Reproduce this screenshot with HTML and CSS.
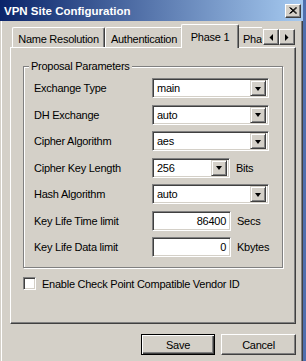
FILE: index.html
```html
<!DOCTYPE html>
<html lang="en">
<head>
    <meta charset="UTF-8">
    <title>VPN Site Configuration</title>
    <link rel="stylesheet" href="styles.css">
</head>
<body>

<div class="window">

    <!--  title bar  -->
    <div class="titlebar">
        <span class="title">VPN Site Configuration</span>
        <span class="closebtn">
            <svg width="8" height="7" viewBox="0 0 8 7"><path d="M0.5 0.5 L7 6.5 M1.5 0.5 L8 6.5 M7 0.5 L0.5 6.5 M8 0.5 L1.5 6.5" stroke="#000" stroke-width="1" fill="none"/></svg>
        </span>
    </div>

    <!--  tabs  -->
    <div class="tabrow">
        <div class="tabstrip">
            <div class="tab tab-name">Name Resolution</div>
            <div class="tab tab-auth">Authentication</div>
            <div class="tab tab-active">Phase 1</div>
            <div class="tab tab-p2">Phase 2</div>
        </div>
        <div class="scroller">
            <span class="scrollbtn">
                <svg width="4" height="7" viewBox="0 0 4 7"><path d="M4 0 L4 7 L0.5 3.5 Z" fill="#000"/></svg>
            </span>
            <span class="scrollbtn">
                <svg width="4" height="7" viewBox="0 0 4 7"><path d="M0 0 L0 7 L3.5 3.5 Z" fill="#000"/></svg>
            </span>
        </div>
    </div>

    <div class="panel">
        <fieldset class="group">
            <legend>Proposal Parameters</legend>
            <div class="rows">
                <div class="row">
                    <span class="label">Exchange Type</span>
                    <span class="combo"><span class="value">main</span><span class="drop"></span></span>
                </div>
                <div class="row">
                    <span class="label">DH Exchange</span>
                    <span class="combo"><span class="value">auto</span><span class="drop"></span></span>
                </div>
                <div class="row">
                    <span class="label">Cipher Algorithm</span>
                    <span class="combo"><span class="value">aes</span><span class="drop"></span></span>
                </div>
                <div class="row">
                    <span class="label">Cipher Key Length</span>
                    <span class="combo combo-short"><span class="value">256</span><span class="drop"></span></span>
                    <span class="unit">Bits</span>
                </div>
                <div class="row">
                    <span class="label">Hash Algorithm</span>
                    <span class="combo"><span class="value">auto</span><span class="drop"></span></span>
                </div>
                <div class="row">
                    <span class="label">Key Life Time limit</span>
                    <span class="field">86400</span>
                    <span class="unit">Secs</span>
                </div>
                <div class="row">
                    <span class="label">Key Life Data limit</span>
                    <span class="field">0</span>
                    <span class="unit">Kbytes</span>
                </div>
            </div>
        </fieldset>

        <div class="check">
            <span class="checkbox"></span>
            <span>Enable Check Point Compatible Vendor ID</span>
        </div>
    </div>

    <div class="buttons">
        <button class="btn btn-default">Save</button>
        <button class="btn btn-cancel">Cancel</button>
    </div>

</div>

</body>
</html>
```

FILE: styles.css
```css
body {
    margin: 0;
    background: #4f6fae;
    font-family: "Liberation Sans", Arial, sans-serif;
    font-size: 11px;
    letter-spacing: -0.25px;
    color: #000;
}

/* the dialog window */
.window {
    width: 303px;
    height: 361px;
    overflow: hidden;
    background: #d4d0c8;
    box-shadow: inset 1px 0 #d4d0c8, inset 2px 0 #fff, inset -1px 0 #404040, inset -2px 0 #808080;
}

.titlebar {
    height: 21px;
    display: flex;
    align-items: center;
    justify-content: space-between;
    padding: 0 2px 0 4px;
    background: linear-gradient(to right, #0a246a, #a6caf0);
    color: #fff;
}

.title {
    font-weight: bold;
    font-size: 11.5px;
    letter-spacing: 0;
}

.closebtn, .scrollbtn {
    display: flex;
    align-items: center;
    justify-content: center;
    box-sizing: border-box;
    background: #d4d0c8;
    border: 1px solid;
    border-color: #fff #404040 #404040 #fff;
    box-shadow: inset -1px -1px #808080;
}

.closebtn {
    width: 16px;
    height: 14px;
}

/* Tabs */
.tabrow {
    position: relative;
    z-index: 1;
    display: flex;
    height: 27px;
    padding-left: 12px;
}

.tabstrip {
    display: flex;
    align-items: flex-end;
    width: 250px;
    height: 27px;
    overflow: hidden;
}

.tab {
    flex: none;
    box-sizing: border-box;
    height: 20px;
    margin-bottom: 1px;
    padding-top: 5px;
    line-height: 13px;
    text-align: center;
    white-space: nowrap;
    background: #d4d0c8;
    border: 1px solid;
    border-bottom: none;
    border-color: #fff #404040 #fff #fff;
    border-radius: 2px 2px 0 0;
    box-shadow: inset -1px 0 #808080;
}

.tab-name { width: 93px; }
.tab-auth { width: 78px; }
.tab-p2 { width: 60px; text-align: left; padding-left: 5px; }

.tab-active {
    position: relative;
    width: 58px;
    height: 24px;
    margin: 0 -2px;
    padding-top: 6px;
}

.scroller {
    display: flex;
    margin: 8px 0 0 1px;
}

.scrollbtn {
    width: 16px;
    height: 16px;
}

/* Tab page */
.panel {
    box-sizing: border-box;
    width: 286px;
    height: 277px;
    margin: -1px 0 0 10px;
    border: 1px solid;
    border-color: #fff #404040 #404040 #fff;
    box-shadow: inset -1px -1px #808080;
}

.group {
    box-sizing: border-box;
    width: 260px;
    margin: 12px 0 0 12px;
    padding: 0 0 10px 0;
    border: 1px solid #808080;
    box-shadow: inset 1px 1px #fff, 1px 1px #fff;
}

.group legend {
    margin-left: 5px;
    padding: 0 2px;
    line-height: 13px;
    background: #d4d0c8;
}

.rows {
    display: grid;
    row-gap: 6.5px;
    padding: 5px 0 0 10px;
}

.row {
    display: flex;
    align-items: center;
    height: 20px;
}

.label {
    width: 118px;
}

.combo, .field {
    box-sizing: border-box;
    height: 20px;
    display: flex;
    align-items: center;
    background: #fff;
    border: 1px solid;
    border-color: #808080 #fff #fff #808080;
    box-shadow: inset 1px 1px #404040, inset -1px -1px #d4d0c8;
}

.combo {
    width: 117px;
    justify-content: space-between;
    padding: 2px;
}

.combo-short {
    width: 78px;
}

.combo .value {
    padding-left: 2px;
}

.drop {
    width: 16px;
    height: 16px;
    box-sizing: border-box;
    display: flex;
    align-items: center;
    justify-content: center;
    background: #d4d0c8;
    border: 1px solid;
    border-color: #d4d0c8 #404040 #404040 #d4d0c8;
    box-shadow: inset 1px 1px #fff, inset -1px -1px #808080;
}

.drop::after {
    content: "";
    border-left: 3.5px solid transparent;
    border-right: 3.5px solid transparent;
    border-top: 4px solid #000;
    margin-top: 1px;
}

.field {
    width: 79px;
    justify-content: flex-end;
    padding-right: 4px;
}

.unit {
    margin-left: 6px;
}

.check {
    display: flex;
    align-items: center;
    margin: 9px 0 0 12px;
}

.checkbox {
    box-sizing: border-box;
    width: 13px;
    height: 13px;
    margin-right: 6px;
    background: #fff;
    border: 1px solid;
    border-color: #808080 #fff #fff #808080;
    box-shadow: inset 1px 1px #404040, inset -1px -1px #d4d0c8;
}

/* Buttons */
.buttons {
    display: flex;
    justify-content: flex-end;
    gap: 6px;
    padding: 10px 7px 0 0;
}

.btn {
    box-sizing: border-box;
    height: 21px;
    padding: 0;
    font-family: "Liberation Sans", Arial, sans-serif;
    font-size: 11px;
    letter-spacing: -0.25px;
    color: #000;
    background: #d4d0c8;
    border: 1px solid;
    border-color: #fff #404040 #404040 #fff;
    box-shadow: inset -1px -1px #808080;
}

.btn-default {
    width: 74px;
    border-color: #000;
    box-shadow: inset 1px 1px #fff, inset -1px -1px #404040, inset -2px -2px #808080;
}

.btn-cancel {
    width: 75px;
}
```
